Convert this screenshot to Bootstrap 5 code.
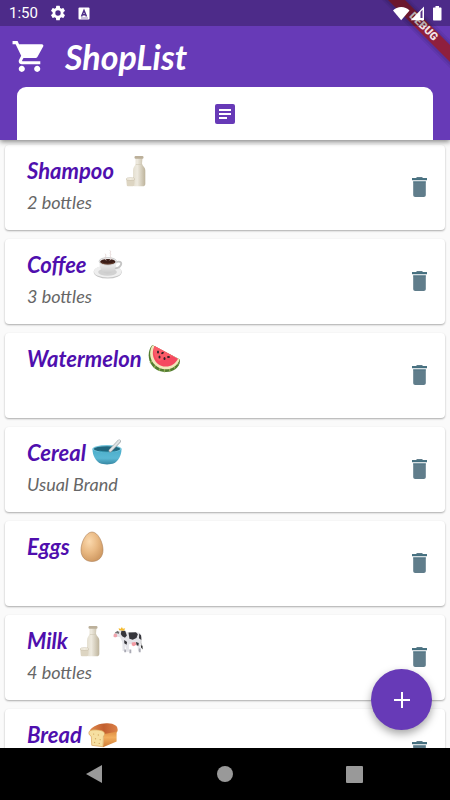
<!DOCTYPE html>
<html lang="en">
<head>
<meta charset="utf-8">
<meta name="viewport" content="width=device-width, initial-scale=1">
<title>ShopList</title>
<link href="https://cdn.jsdelivr.net/npm/bootstrap@5.3.0/dist/css/bootstrap.min.css" rel="stylesheet">
<style>
  body { background: #fafafa; font-family: Roboto, sans-serif; }
  svg { display: block; flex: none; }
  .app-header { background: #673ab7; box-shadow: 0 2px 5px rgba(0,0,0,.45); z-index: 2; }
  .status-bar { height: 26px; padding: 0 8px 0 9px; background: rgba(0,0,0,.25); z-index: 1; }
  .status-time { font-size: 15px; line-height: 26px; }
  .ribbon { top: 0; right: 0; }
  .ribbon text { font: 900 11px Roboto, sans-serif; }
  .script { font-family: Lato, sans-serif; font-style: italic; font-weight: 700; }
  .brand-row { height: 61px; padding-left: 11px; gap: 17px; }
  .brand-name { font-size: 34px; line-height: 36px; }
  .tab-row { padding: 0 17px; }
  .tab-panel { height: 53px; border-radius: 9px 9px 0 0; }
  .shop-list { padding: 5px 5px 0; gap: 9px; }
  .shop-item { height: 85px; padding: 10px 18px 0 22px; border-radius: 4px; background: #fff; box-shadow: 0 1px 2px rgba(0,0,0,.32); flex: none; }
  .item-name { font-size: 22px; line-height: 32px; color: #4f0fae; gap: 6px; }
  .item-note { font-size: 18px; line-height: 30px; color: #666; font-weight: 400; }
  .trash { margin-top: 22px; height: 20px; }
  .fab { right: 18px; bottom: 18px; width: 61px; height: 61px; background: #673ab7; box-shadow: 0 4px 8px rgba(0,0,0,.35); }
  .nav-keys { height: 52px; padding: 0 66px; background: #000; z-index: 2; }
</style>
</head>
<body>
<svg width="0" height="0" class="position-absolute" aria-hidden="true">
  <defs>
    <linearGradient id="glass" x1="0" x2="1"><stop offset="0" stop-color="#e4dfd0"/><stop offset=".35" stop-color="#eeeadf"/><stop offset="1" stop-color="#bdb39b"/></linearGradient>
    <linearGradient id="china" x1="0" x2="0" y1="0" y2="1"><stop offset="0" stop-color="#fafafa"/><stop offset="1" stop-color="#c9c9c9"/></linearGradient>
    <linearGradient id="bowlblue" x1="0" x2="0" y1="0" y2="1"><stop offset="0" stop-color="#4badca"/><stop offset=".6" stop-color="#5ab8d4"/><stop offset="1" stop-color="#3787a3"/></linearGradient>
    <radialGradient id="shell" cx=".38" cy=".32" r=".7"><stop offset="0" stop-color="#fbd9ae"/><stop offset=".55" stop-color="#e9b983"/><stop offset="1" stop-color="#d09a63"/></radialGradient>
    <linearGradient id="crust" x1="0" x2="1"><stop offset="0" stop-color="#e08a4c"/><stop offset=".5" stop-color="#c25f30"/><stop offset="1" stop-color="#dc8147"/></linearGradient>
    <linearGradient id="loafside" x1="0" x2="0" y1="0" y2="1"><stop offset="0" stop-color="#d47b32"/><stop offset=".5" stop-color="#f2ae5e"/><stop offset="1" stop-color="#cf7932"/></linearGradient>
    <symbol id="bottle" viewBox="0 0 32 32">
      <path d="M15.500 2.500h7l-.5 6c.4 2.400 3.300 3.700 3.300 7V29c0 1.600-1.200 2.300-2.800 2.300h-7c-1.600 0-2.500-.7-2.500-2.300V15.500c0-3.300 2.200-4.600 2.500-7z" fill="url(#glass)"/>
      <rect x="14.500" y="1" width="9" height="2.700" rx="1.200" fill="#bcb09a"/>
      <path d="M16 9.500h6" stroke="#cfc7b4" stroke-width=".6"/>
      <path d="M6.200 24h8.600l-.6 6.200c-.1.800-.8 1.100-1.500 1.100H8.300c-.8 0-1.400-.3-1.500-1.100z" fill="#ddd5c2"/>
      <ellipse cx="10.500" cy="24" rx="4.300" ry="1.300" fill="#f6f2e6" stroke="#b9ad95" stroke-width=".5"/>
    </symbol>
    <symbol id="coffee" viewBox="0 0 32 32">
      <ellipse cx="15.700" cy="23.500" rx="15" ry="7" fill="#c6c6c6"/>
      <ellipse cx="15.700" cy="22.800" rx="14.700" ry="6.600" fill="#eee"/>
      <ellipse cx="15.500" cy="23.500" rx="10" ry="4" fill="#d1d1d1"/>
      <path d="M24 13.500c4-2.200 7-.5 5.800 2.300-1 2.400-4 3.700-7.300 3.900" fill="none" stroke="#c5c5c5" stroke-width="2"/>
      <path d="M6.500 12c0 6 2.500 10 5.500 12.300 2 1 5.500 1 7.500 0 3.300-2.200 5.500-6.300 5.500-12.300z" fill="url(#china)"/>
      <ellipse cx="15.800" cy="12" rx="9.300" ry="4" fill="#ededed" stroke="#aaa" stroke-width=".5"/>
      <ellipse cx="15.800" cy="12.500" rx="8.200" ry="3" fill="#3b1d17"/>
      <path d="M9 13.500c3 2 10 2 13.500 0" stroke="#8a5a40" stroke-width=".6" fill="none"/>
      <path d="M14 11c-2.500-3 1-4-1-7M18 11c3-3-1-4 1-6.500-2-1.500 1-2.500-1-4" fill="none" stroke="#e2d3d2" stroke-width="1"/>
    </symbol>
    <symbol id="melon" viewBox="0 0 32 32">
      <path d="M4.300 2C-2.500 10 .5 24 11.500 28 22 31.500 32.500 26 32 16.500z" fill="#537d30"/>
      <path d="M5 28M2 20l3-3M6 25l2.500-4M11 28l1.500-4M16.500 29.300v-4M22 28.500l-1-4M27 25.500l-2-3.500M30.500 21.500l-3-3" stroke="#91ad58" stroke-width="1.300"/>
      <path d="M4.500 2.200C-.3 10 2.300 21 11.500 25c8 3.300 17 0 20.300-8.600z" fill="#f1e7bb"/>
      <path d="M6.500 3C3 10 5 19 12.500 22.400 19.500 25.500 26.500 22.500 30 15.800z" fill="#f5485f"/>
      <path d="M6.500 3C5 8 6 15 11 18l14-5z" fill="#fa5b68"/>
      <g fill="#302128"><ellipse cx="10" cy="9" rx="1" ry="1.500"/><ellipse cx="14.500" cy="10" rx="1.500" ry="1" transform="rotate(-35 14.500 10)"/><ellipse cx="11.500" cy="14" rx="1" ry="1.500"/><ellipse cx="16.500" cy="15.500" rx="1" ry="1.500"/><ellipse cx="20.500" cy="14" rx="1.500" ry="1"/></g>
    </symbol>
    <symbol id="bowl" viewBox="0 0 32 32">
      <path d="M.5 11.500C.5 19 4 24.500 8.500 27c3.500 1.600 11.500 1.600 15 0 4.500-2.500 8-8 8-15.500z" fill="url(#bowlblue)"/>
      <ellipse cx="16" cy="11.500" rx="15.500" ry="4" fill="#75c5dc"/>
      <ellipse cx="16" cy="11.800" rx="14" ry="3.100" fill="#20677e"/>
      <path d="M8 14c4 1.300 12 1.300 17 0" stroke="#3b9fba" stroke-width="1" fill="none"/>
      <path d="M19.500 13.500 29 3.500" stroke="#8b969b" stroke-width="3.600" stroke-linecap="round"/>
      <path d="M19.500 13.300 29 3.300" stroke="#e1e4e5" stroke-width="2.500" stroke-linecap="round"/>
    </symbol>
    <symbol id="egg" viewBox="0 0 32 32">
      <path d="M16 1C22 1 27 11.500 27 19c0 7-4.500 11.500-11 11.500S5 26 5 19C5 11.500 10 1 16 1z" fill="url(#shell)" stroke="#ad8057" stroke-width=".6"/>
    </symbol>
    <symbol id="cow" viewBox="0 0 32 32">
      <path d="M29 10c2 3-.5 6 1.500 11" stroke="#aaa" stroke-width="1" fill="none"/>
      <path d="M29.500 20.500l2 .5.200 4-1.700-2z" fill="#333"/>
      <path d="M3 7l6-3 5 2 3 1 10-.2c2.500.2 3.500 2.500 3 6l-1 6 .5 7-2.700 1.200-.8-6-3-2-6 .5 0 8h-2.700l-.6-7-1.200 6-2.300.1-.3-9.600-2.400-5L5 11.500 2 12c-2-.5-2-3 0-4z" fill="#e4e4e9"/>
      <path d="M1 8.500c1.500-1 4 0 3.500 2.300-.5 1.600-3.500 1.500-4 .3z" fill="#efa3ac"/>
      <path d="M9 5l4 0 1.800 5-2 2.500-3-1.500-1.500-2.500zM16.500 7l8-.3 2 2-1.500 4-4 2-3.500-1zM28 8l2 2 .2 5-2.500-2zM24.500 17l3 1-.4 3-2-.5zM12 15l3 2-.5 3-2.500-1.500z" fill="#35353b"/>
      <path d="M20 17.500l4-.5 1 3-3 1.500-2-1z" fill="#f29aa3"/>
      <path d="M6.500 4.500L6 2l2 1.200L9.500 1l1 2 2.500-.5-1.200 2.500z" fill="#f5bb2f"/>
      <path d="M3 8l-1-1 3-2 2 2z" fill="#777"/><circle cx="5.500" cy="7.500" r=".7" fill="#222"/>
      <path d="M13 25v3M18.500 25v4M28.500 24v4" stroke="#aaaab4" stroke-width="2"/>
    </symbol>
    <symbol id="loaf" viewBox="0 0 32 32">
      <path d="M17 14c0-4 12-8 14-4.500 1.500 2.500-.5 4-.5 4V23L16 29z" fill="url(#loafside)"/>
      <path d="M2 11C5 6 14 3 21 3.500c7 .3 11 3 10.500 6.500-.3 3-5 3-14.500 5-4-2-10 0-14-1.500z" fill="url(#crust)"/>
      <path d="M1.500 12c2-2.200 13-2 15.700 1 1.300 1.800.3 3.500-.7 4L16 28.500 4 27l-.5-9.500C1 16 .3 14 1.500 12z" fill="#f6dfa1" stroke="#d89b4f" stroke-width=".7"/>
      <g fill="#d5ab62"><circle cx="6" cy="15" r=".7"/><circle cx="11" cy="16" r=".7"/><circle cx="8" cy="20" r=".7"/><circle cx="13" cy="21" r=".7"/><circle cx="7" cy="24" r=".7"/><circle cx="12" cy="25" r=".7"/></g>
    </symbol>
    <symbol id="bin" viewBox="0 0 15 20">
      <path d="M5 0h5l1 1h4v2.200H0V1h4zM1.200 4.500h12.600V18c0 1.200-.8 2-2 2H3.200c-1.200 0-2-.8-2-2z" fill="#607d8b"/>
      <path d="M0 1.200h15v1.900H0zM1.200 4.500h12.600v.8H1.200z" fill="#447080"/>
    </symbol>
  </defs>
</svg>

<div class="vh-100 d-flex flex-column overflow-hidden">
  <header class="app-header position-relative text-white flex-shrink-0">
    <svg class="ribbon position-absolute" width="90" height="84" viewBox="0 0 90 84" aria-hidden="true">
      <path d="M26-10 110 74" stroke="#000" stroke-opacity=".06" stroke-width="20"/>
      <path d="M26-10 110 74" stroke="#000" stroke-opacity=".08" stroke-width="16"/>
      <path d="M28 0h17l45 45v17z" fill="#8f1f3d"/>
      <text transform="translate(64 26) rotate(45)" text-anchor="middle" y="4" fill="#f3e6ea">DEBUG</text>
    </svg>
    <div class="status-bar position-relative d-flex align-items-center">
      <span class="status-time">1:50</span>
      <svg class="ms-2" width="24" height="18" viewBox="0 0 30 24" fill="#fff"><path d="M22.140 12.940c.04-.3.060-.61.060-.94 0-.32-.02-.64-.07-.94l2.030-1.580a.5.5 0 0 0 .12-.61l-1.920-3.320a.5.5 0 0 0-.59-.22l-2.390.96c-.5-.38-1.030-.7-1.620-.94l-.36-2.540a.5.5 0 0 0-.48-.41h-3.840a.5.5 0 0 0-.47.41l-.36 2.540c-.59.24-1.130.57-1.620.94l-2.390-.96a.5.500 0 0 0-.59.220L5.740 8.870a.5.5 0 0 0 .12.610l2.030 1.580c-.05.3-.09.63-.09.940s.02.640.07.940l-2.030 1.580a.5.500 0 0 0-.12.610l1.920 3.320c.12.220.37.290.59.220l2.390-.96c.5.380 1.030.7 1.620.940l.36 2.540c.05.240.24.410.48.410h3.840c.24 0 .44-.17.470-.41l.36-2.540c.59-.24 1.130-.56 1.620-.94l2.390.96c.22.080.47 0 .59-.22l1.920-3.320a.5.500 0 0 0-.12-.61zM15 15.600a3.600 3.600 0 1 1 0-7.200 3.600 3.600 0 0 1 0 7.200z"/></svg>
      <svg class="ms-2" width="12" height="13" viewBox="0 0 12 13"><rect x=".5" y=".5" width="11" height="12" rx="1" fill="#fff"/><path d="M3.500 9.500 6 3.500l2.500 6M4.500 7.700h3" fill="none" stroke="#4d2c89" stroke-width="1.500"/><path d="M3 11h7" stroke="#4d2c89" stroke-width=".6"/></svg>
      <svg class="ms-auto" width="49" height="15" viewBox="0 0 49 15" fill="#fff"><path d="M0 4.500C4-.2 12.500-.2 16.500 4.500L8.200 14.300z"/><path d="M31 .5v13.800H17.700z"/><path d="M27.500 6v6h2V3.800z" fill="#563087"/><path d="M41 1.500h1.500V0h3.500v1.500h1.500c.6 0 1 .4 1 1v11c0 .6-.4 1-1 1H41c-.6 0-1-.4-1-1v-11c0-.6.4-1 1-1z"/></svg>
    </div>
    <div class="brand-row d-flex align-items-center">
      <svg width="37" height="37" viewBox="0 0 24 24" fill="#fff" aria-hidden="true"><path d="M7 18c-1.100 0-1.990.9-1.990 2S5.900 22 7 22s2-.9 2-2-.9-2-2-2zM1 2v2h2l3.600 7.590-1.350 2.450c-.16.280-.25.610-.25.960 0 1.100.9 2 2 2h12v-2H7.420c-.14 0-.25-.11-.25-.25l.030-.12.900-1.630h7.450c.75 0 1.410-.41 1.750-1.030l3.580-6.490A1 1 0 0 0 20.010 4H5.210l-.94-2H1zm16 16c-1.100 0-1.990.9-1.990 2s.89 2 1.990 2 2-.9 2-2-.9-2-2-2z"/></svg>
      <h1 class="brand-name script m-0">ShopList</h1>
    </div>
    <div class="tab-row">
      <button type="button" class="tab-panel d-flex w-100 border-0 bg-white justify-content-center align-items-center" aria-label="Shopping list">
        <svg width="20" height="20" viewBox="0 0 20 20"><rect width="20" height="20" rx="2" fill="#673ab7"/><path d="M4 6h12M4 10h12M4 14h8" stroke="#fff" stroke-width="2"/></svg>
      </button>
    </div>
  </header>

  <main class="position-relative flex-fill overflow-hidden">
    <ul class="shop-list list-unstyled d-flex flex-column m-0 h-100">
      <li class="shop-item d-flex justify-content-between align-items-start script">
        <div><div class="item-name d-flex align-items-center">Shampoo <svg width="32" height="32"><use href="#bottle"/></svg></div><div class="item-note">2 bottles</div></div>
        <button type="button" class="trash btn p-0 border-0" aria-label="Delete Shampoo"><svg width="15" height="20"><use href="#bin"/></svg></button>
      </li>
      <li class="shop-item d-flex justify-content-between align-items-start script">
        <div><div class="item-name d-flex align-items-center">Coffee <svg width="30" height="30"><use href="#coffee"/></svg></div><div class="item-note">3 bottles</div></div>
        <button type="button" class="trash btn p-0 border-0" aria-label="Delete Coffee"><svg width="15" height="20"><use href="#bin"/></svg></button>
      </li>
      <li class="shop-item d-flex justify-content-between align-items-start script">
        <div class="item-name d-flex align-items-center">Watermelon <svg width="32" height="32"><use href="#melon"/></svg></div>
        <button type="button" class="trash btn p-0 border-0" aria-label="Delete Watermelon"><svg width="15" height="20"><use href="#bin"/></svg></button>
      </li>
      <li class="shop-item d-flex justify-content-between align-items-start script">
        <div><div class="item-name d-flex align-items-center">Cereal <svg width="30" height="30"><use href="#bowl"/></svg></div><div class="item-note">Usual Brand</div></div>
        <button type="button" class="trash btn p-0 border-0" aria-label="Delete Cereal"><svg width="15" height="20"><use href="#bin"/></svg></button>
      </li>
      <li class="shop-item d-flex justify-content-between align-items-start script">
        <div class="item-name d-flex align-items-center">Eggs <svg width="32" height="32"><use href="#egg"/></svg></div>
        <button type="button" class="trash btn p-0 border-0" aria-label="Delete Eggs"><svg width="15" height="20"><use href="#bin"/></svg></button>
      </li>
      <li class="shop-item d-flex justify-content-between align-items-start script">
        <div><div class="item-name d-flex align-items-center">Milk <svg width="32" height="32"><use href="#bottle"/></svg><svg width="32" height="30"><use href="#cow"/></svg></div><div class="item-note">4 bottles</div></div>
        <button type="button" class="trash btn p-0 border-0" aria-label="Delete Milk"><svg width="15" height="20"><use href="#bin"/></svg></button>
      </li>
      <li class="shop-item d-flex justify-content-between align-items-start script">
        <div class="item-name d-flex align-items-center">Bread <svg width="30" height="30"><use href="#loaf"/></svg></div>
        <button type="button" class="trash btn p-0 border-0" aria-label="Delete Bread"><svg width="15" height="20"><use href="#bin"/></svg></button>
      </li>
    </ul>
    <button type="button" class="fab position-absolute btn rounded-circle border-0 p-0 d-flex align-items-center justify-content-center" aria-label="Add item">
      <svg width="16" height="16" viewBox="0 0 16 16"><path d="M8 0v16M0 8h16" stroke="#fff" stroke-width="2"/></svg>
    </button>
  </main>

  <nav class="nav-keys d-flex flex-shrink-0 justify-content-between align-items-center" aria-label="System">
    <button type="button" class="btn p-0 border-0 px-3" aria-label="Back"><svg width="24" height="20" viewBox="0 0 24 20"><path d="M20 1v18L4 10z" fill="#999"/></svg></button>
    <button type="button" class="btn p-0 border-0" aria-label="Home"><svg width="16" height="16"><circle cx="8" cy="8" r="8" fill="#999"/></svg></button>
    <button type="button" class="btn p-0 border-0 px-3" aria-label="Recent apps"><svg width="24" height="17"><rect x="2" width="17" height="17" rx="1" fill="#999"/></svg></button>
  </nav>
</div>
<script src="https://cdn.jsdelivr.net/npm/bootstrap@5.3.0/dist/js/bootstrap.bundle.min.js"></script>
</body>
</html>
